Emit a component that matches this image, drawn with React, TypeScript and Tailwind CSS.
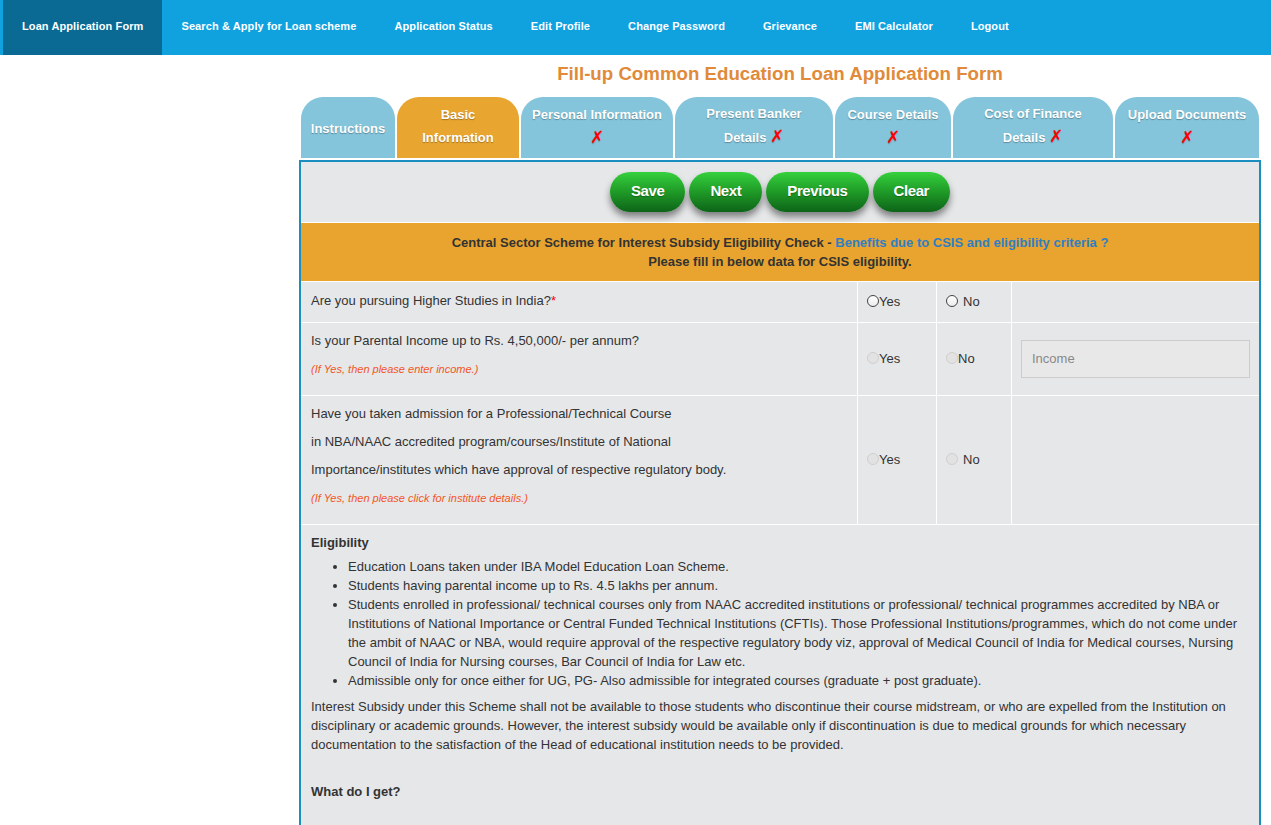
import React from "react";

const navItems = [
  "Loan Application Form",
  "Search & Apply for Loan scheme",
  "Application Status",
  "Edit Profile",
  "Change Password",
  "Grievance",
  "EMI Calculator",
  "Logout",
];

function X() {
  return (
    <span className="text-[#ff0000] text-[17px] font-bold [font-family:'DejaVu_Sans',sans-serif] [text-shadow:0_1px_1px_rgba(0,0,0,0.25)]">
      ✗
    </span>
  );
}

function Radio({ disabled }: { disabled?: boolean }) {
  return disabled ? (
    <span className="inline-block w-[12px] h-[12px] rounded-full border border-[#cfcfcf] bg-[#e2e2e2] mb-[2px] shrink-0" />
  ) : (
    <span className="inline-block w-[12px] h-[12px] rounded-full border border-[#444] bg-gradient-to-b from-[#ffffff] to-[#ececec] mb-[2px] shrink-0" />
  );
}

function Tab({
  w,
  active,
  children,
}: {
  w: string;
  active?: boolean;
  children: React.ReactNode;
}) {
  return (
    <div
      className={`${w} h-[61px] shrink-0 rounded-t-[22px] flex flex-col items-center justify-center text-center text-white font-bold text-[13px] leading-[23px] pb-[4px] [text-shadow:0_1px_1px_rgba(0,0,0,0.3)] ${
        active ? "bg-[#e8a52f]" : "bg-[#84c5dc]"
      }`}
    >
      {children}
    </div>
  );
}

function Btn({ children }: { children: React.ReactNode }) {
  return (
    <button className="h-[40px] px-[21px] rounded-full bg-gradient-to-b from-[#35d13d] via-[#1f9a27] to-[#0d6418] text-white font-bold text-[15px] tracking-[-0.4px] shadow-[0_5px_7px_rgba(0,0,0,0.45)] [text-shadow:0_1px_1px_rgba(0,0,0,0.3)]">
      {children}
    </button>
  );
}

export default function App() {
  return (
    <div className="min-h-screen bg-white text-[#333] [font-family:'Liberation_Sans',Arial,sans-serif]">
      {/* Nav */}
      <nav className="h-[55px] bg-[#10a2df] flex pl-[3px]">
        {navItems.map((n, i) => (
          <div
            key={n}
            className={`px-[19px] flex items-center pb-[3px] text-white font-bold text-[11px] tracking-[0.1px] ${
              i === 0 ? "bg-[#0a6a94]" : ""
            }`}
          >
            {n}
          </div>
        ))}
      </nav>

      <div className="flex">
        <div className="w-[299px] shrink-0" />
        <div className="w-[962px] shrink-0">
          <h1 className="text-center text-[18.7px] font-bold text-[#e08a3a] leading-[22px] mt-[8px] mb-[12px]">
            Fill-up Common Education Loan Application Form
          </h1>

          {/* Tabs */}
          <div className="flex gap-[2px] pl-[2px]">
            <Tab w="w-[94px]">
              <span className="pt-[6px]">Instructions</span>
            </Tab>
            <Tab w="w-[122px]" active>
              <span>Basic</span>
              <span>Information</span>
            </Tab>
            <Tab w="w-[152px]">
              <span>Personal Information</span>
              <X />
            </Tab>
            <Tab w="w-[158px]">
              <span>Present Banker</span>
              <span>
                Details <X />
              </span>
            </Tab>
            <Tab w="w-[116px]">
              <span>Course Details</span>
              <X />
            </Tab>
            <Tab w="w-[160px]">
              <span>Cost of Finance</span>
              <span>
                Details <X />
              </span>
            </Tab>
            <Tab w="w-[144px]">
              <span>Upload Documents</span>
              <X />
            </Tab>
          </div>

          {/* Content box */}
          <div className="mt-[2px] border-2 border-[#1b8ec0] bg-[#e6e7e9] min-h-[720px]">
            <div className="h-[60px] flex items-center justify-center gap-[4px] pb-[1px]">
              <Btn>Save</Btn>
              <Btn>Next</Btn>
              <Btn>Previous</Btn>
              <Btn>Clear</Btn>
            </div>
            <div className="border-t border-white bg-[#e8a42f] text-center font-bold text-[13px] leading-[19px] pt-[10px] pb-[10px] text-[#333]">
              <div>
                Central Sector Scheme for Interest Subsidy Eligibility Check -{" "}
                <span className="text-[#2e7fc4]">
                  Benefits due to CSIS and eligibility criteria ?
                </span>
              </div>
              <div>Please fill in below data for CSIS eligibility.</div>
            </div>

            {/* Questions grid */}
            <div className="grid grid-cols-[556px_78px_74px_1fr] gap-px bg-white border-t border-white border-b text-[13px]">
              {/* Row 1 */}
              <div className="bg-[#e6e7e9] pl-[10px] pt-[5px] pb-[7px] leading-[28px]">
                Are you pursuing Higher Studies in India?
                <span className="text-[#ff0000]">*</span>
              </div>
              <div className="bg-[#e6e7e9] pl-[9px] flex items-center">
                <Radio />
                <span>Yes</span>
              </div>
              <div className="bg-[#e6e7e9] pl-[9px] flex items-center gap-[5px]">
                <Radio />
                <span>No</span>
              </div>
              <div className="bg-[#e6e7e9]" />

              {/* Row 2 */}
              <div className="bg-[#e6e7e9] pl-[10px] pt-[4px] pb-[12px] leading-[28px]">
                <div>Is your Parental Income up to Rs. 4,50,000/- per annum?</div>
                <div className="italic text-[11px] text-[#f2561f]">
                  (If Yes, then please enter income.)
                </div>
              </div>
              <div className="bg-[#e6e7e9] pl-[9px] flex items-center">
                <Radio disabled />
                <span>Yes</span>
              </div>
              <div className="bg-[#e6e7e9] pl-[9px] flex items-center">
                <Radio disabled />
                <span>No</span>
              </div>
              <div className="bg-[#e6e7e9] px-[9px] flex items-center">
                <div className="w-full h-[38px] border border-[#cccccc] bg-[#e8e8e8] flex items-center pl-[10px] text-[#888] text-[13px]">
                  Income
                </div>
              </div>

              {/* Row 3 */}
              <div className="bg-[#e6e7e9] pl-[10px] pt-[4px] pb-[12px] leading-[28px]">
                <div>Have you taken admission for a Professional/Technical Course</div>
                <div>in NBA/NAAC accredited program/courses/Institute of National</div>
                <div>
                  Importance/institutes which have approval of respective regulatory body.
                </div>
                <div className="italic text-[11px] text-[#f2561f]">
                  (If Yes, then please click for institute details.)
                </div>
              </div>
              <div className="bg-[#e6e7e9] pl-[9px] flex items-center">
                <Radio disabled />
                <span>Yes</span>
              </div>
              <div className="bg-[#e6e7e9] pl-[9px] flex items-center gap-[5px]">
                <Radio disabled />
                <span>No</span>
              </div>
              <div className="bg-[#e6e7e9]" />
            </div>

            {/* Eligibility */}
            <div className="px-[10px] pt-[8px] text-[13px] leading-[19px]">
              <div className="font-bold mb-[5px]">Eligibility</div>
              <ul className="list-disc pl-[37px] mb-[7px]">
                <li>Education Loans taken under IBA Model Education Loan Scheme.</li>
                <li>Students having parental income up to Rs. 4.5 lakhs per annum.</li>
                <li>
                  Students enrolled in professional/ technical courses only from NAAC
                  accredited institutions or professional/ technical programmes
                  accredited by NBA or Institutions of National Importance or Central
                  Funded Technical Institutions (CFTIs). Those Professional
                  Institutions/programmes, which do not come under the ambit of NAAC or
                  NBA, would require approval of the respective regulatory body viz,
                  approval of Medical Council of India for Medical courses, Nursing
                  Council of India for Nursing courses, Bar Council of India for Law etc.
                </li>
                <li>
                  Admissible only for once either for UG, PG- Also admissible for
                  integrated courses (graduate + post graduate).
                </li>
              </ul>
              <p className="pr-[4px]">
                Interest Subsidy under this Scheme shall not be available to those
                students who discontinue their course midstream, or who are expelled
                from the Institution on disciplinary or academic grounds. However, the
                interest subsidy would be available only if discontinuation is due to
                medical grounds for which necessary documentation to the satisfaction
                of the Head of educational institution needs to be provided.
              </p>
              <div className="font-bold mt-[28px]">What do I get?</div>
            </div>
          </div>
        </div>
      </div>
    </div>
  );
}
